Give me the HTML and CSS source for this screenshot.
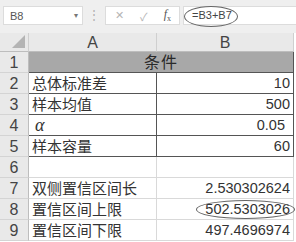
FILE: index.html
```html
<!DOCTYPE html>
<html lang="zh">
<head>
    <meta charset="UTF-8">
    <meta name="viewport" content="width=device-width, initial-scale=1.0">
    <title>置信区间</title>
    <link rel="stylesheet" href="styles.css">
</head>
<body>
    <div class="formula-bar">
        <div class="name-box">
            <span>B8</span>
            <span class="caret">&#9662;</span>
        </div>
        <div class="dots">&#8942;</div>
        <div class="fx-box">
            <span class="btn">&#10005;</span>
            <span class="btn">&#10003;</span>
            <span class="btn fx"><i>f</i><sub>x</sub></span>
        </div>
        <div class="formula">
            <span class="formula-text">=B3+B7</span>
            <span class="ring ring-formula"></span>
        </div>
    </div>

    <div class="sheet">
        <div class="corner"><span class="tri"></span></div>
        <div class="col-head">A</div>
        <div class="col-head">B</div>
        <div class="pad"></div>

        <div class="row-head">1</div>
        <div class="cell title boxed">条件</div>
        <div class="pad"></div>

        <div class="row-head">2</div>
        <div class="cell boxed">总体标准差</div>
        <div class="cell num boxed">10</div>
        <div class="pad"></div>

        <div class="row-head">3</div>
        <div class="cell boxed">样本均值</div>
        <div class="cell num boxed">500</div>
        <div class="pad"></div>

        <div class="row-head">4</div>
        <div class="cell boxed"><span class="alpha">α</span></div>
        <div class="cell num boxed alpha-val">0.05</div>
        <div class="pad"></div>

        <div class="row-head">5</div>
        <div class="cell boxed">样本容量</div>
        <div class="cell num boxed">60</div>
        <div class="pad"></div>

        <div class="row-head">6</div>
        <div class="cell blank"></div>
        <div class="cell blank"></div>
        <div class="pad"></div>

        <div class="row-head">7</div>
        <div class="cell">双侧置信区间长</div>
        <div class="cell num">2.530302624</div>
        <div class="pad"></div>

        <div class="row-head">8</div>
        <div class="cell">置信区间上限</div>
        <div class="cell num">502.5303026<span class="ring ring-cell"></span></div>
        <div class="pad"></div>

        <div class="row-head">9</div>
        <div class="cell">置信区间下限</div>
        <div class="cell num">497.4696974</div>
        <div class="pad"></div>
    </div>
</body>
</html>
```

FILE: styles.css
```css
body {
    margin: 0;
    width: 296px;
    height: 242px;
    overflow: hidden;
    background: #ffffff;
    font-family: "Liberation Sans", "Noto Sans CJK SC", sans-serif;
    color: #333333;
}

/* formula bar */
.formula-bar {
    height: 33px;
    box-sizing: border-box;
    padding: 6px 0 0 3px;
    background: #efefef;
    display: flex;
    align-items: flex-start;
}
.name-box {
    width: 80px;
    height: 19px;
    box-sizing: border-box;
    background: #ffffff;
    border: 1px solid #dcdcdc;
    display: flex;
    align-items: center;
    justify-content: space-between;
    padding: 0 4px 0 6px;
    font-size: 11px;
    color: #555555;
}
.caret {
    font-size: 8px;
    color: #777777;
}
.dots {
    width: 22px;
    text-align: center;
    font-size: 12px;
    line-height: 19px;
    color: #b0b0b0;
}
.fx-box {
    width: 75px;
    height: 19px;
    box-sizing: border-box;
    background: #ffffff;
    border: 1px solid #dcdcdc;
    display: flex;
    align-items: center;
    justify-content: space-between;
    padding: 0 8px 0 9px;
    font-size: 11px;
    color: #b5b5b5;
}
.btn.fx {
    color: #555555;
    font-family: "Liberation Serif", serif;
    font-size: 12px;
}
.btn.fx sub {
    font-size: 8px;
}
.formula {
    position: relative;
    flex: 1;
    height: 19px;
    margin-left: 3px;
    box-sizing: border-box;
    background: #ffffff;
    border: 1px solid #dcdcdc;
    border-right: none;
    font-size: 11px;
    line-height: 17px;
    padding-left: 8px;
    color: #444444;
}
.ring {
    position: absolute;
    border: 1px solid #666666;
    border-radius: 50%;
}
.ring-formula {
    left: 0;
    top: -1px;
    width: 52px;
    height: 19px;
}

/* grid */
.sheet {
    display: grid;
    grid-template-columns: 29px 128px 137px 2px;
    grid-template-rows: 19px repeat(9, 21px);
    background: #ffffff;
}
.corner {
    background: #e9e9e9;
    border-right: 1px solid #cfcfcf;
    border-bottom: 1px solid #bdbdbd;
    position: relative;
}
.tri {
    position: absolute;
    right: 3px;
    bottom: 3px;
    width: 0;
    height: 0;
    border-left: 13px solid transparent;
    border-bottom: 13px solid #b4b4b4;
}
.col-head {
    background: #e9e9e9;
    border-right: 1px solid #cfcfcf;
    border-bottom: 1px solid #bdbdbd;
    text-align: center;
    font-size: 16px;
    line-height: 19px;
    color: #444444;
}
.pad {
    background: #ffffff;
}
.row-head {
    background: #e9e9e9;
    border-right: 1px solid #bdbdbd;
    border-bottom: 1px solid #d4d4d4;
    text-align: center;
    font-size: 16px;
    line-height: 21px;
    color: #444444;
}
.cell {
    position: relative;
    border-right: 1px solid #d9d9d9;
    border-bottom: 1px solid #d9d9d9;
    font-size: 15px;
    line-height: 21px;
    padding: 0 3px;
    white-space: nowrap;
}
.cell.boxed {
    border-right: 1px solid #555555;
    border-bottom: 1px solid #555555;
}
.cell.title {
    grid-column: 2 / 4;
    background: #a8a8a8;
    text-align: center;
    font-size: 16px;
    letter-spacing: 1px;
    color: #2a2a2a;
}
.num {
    text-align: right;
    font-size: 14.5px;
}
.alpha-val {
    padding-right: 8px;
}
.alpha {
    font-family: "Liberation Serif", serif;
    font-style: italic;
    font-size: 18px;
    padding-left: 3px;
}
.ring-cell {
    left: 39px;
    top: 1px;
    width: 97px;
    height: 17px;
}
```
